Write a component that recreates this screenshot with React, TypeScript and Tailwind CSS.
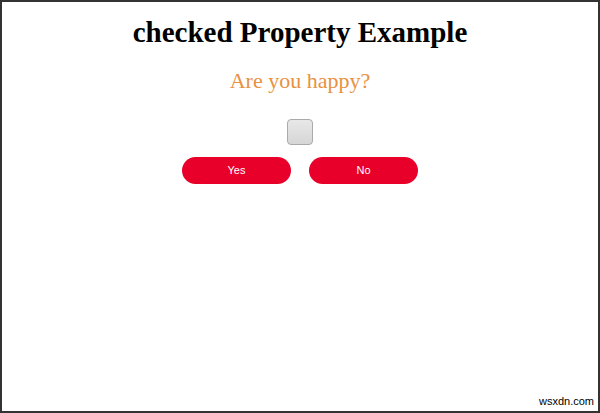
import { useState } from "react";

export default function App() {
  const [checked, setChecked] = useState(false);

  return (
    <div className="relative h-[413px] w-[600px] border-2 border-[#333] bg-white">
      <div className="flex flex-col items-center pt-[13px]">
        <h1 className="font-['Liberation_Serif',serif] text-[29px] font-bold leading-[34px] text-black">
          checked Property Example
        </h1>
        <p className="mt-[19px] font-['Liberation_Serif',serif] text-[22px] leading-[26px] text-[#e8913f]">
          Are you happy?
        </p>
        <button
          type="button"
          aria-label="happy"
          onClick={() => setChecked(!checked)}
          className="mt-[25px] h-[26px] w-[26px] rounded-[4px] border border-[#aaa] bg-gradient-to-b from-[#e8e8e8] to-[#d6d6d6]"
        />
        <div className="mt-[12px] flex gap-[18px]">
          <button
            type="button"
            onClick={() => setChecked(true)}
            className="h-[27px] w-[109px] rounded-full bg-[#e8002a] font-['Liberation_Sans',sans-serif] text-[11px] font-medium text-white"
          >
            Yes
          </button>
          <button
            type="button"
            onClick={() => setChecked(false)}
            className="h-[27px] w-[109px] rounded-full bg-[#e8002a] font-['Liberation_Sans',sans-serif] text-[11px] font-medium text-white"
          >
            No
          </button>
        </div>
      </div>
      <span className="absolute bottom-[2px] right-[4px] font-['Liberation_Sans',sans-serif] text-[11px] text-black">
        wsxdn.com
      </span>
    </div>
  );
}
